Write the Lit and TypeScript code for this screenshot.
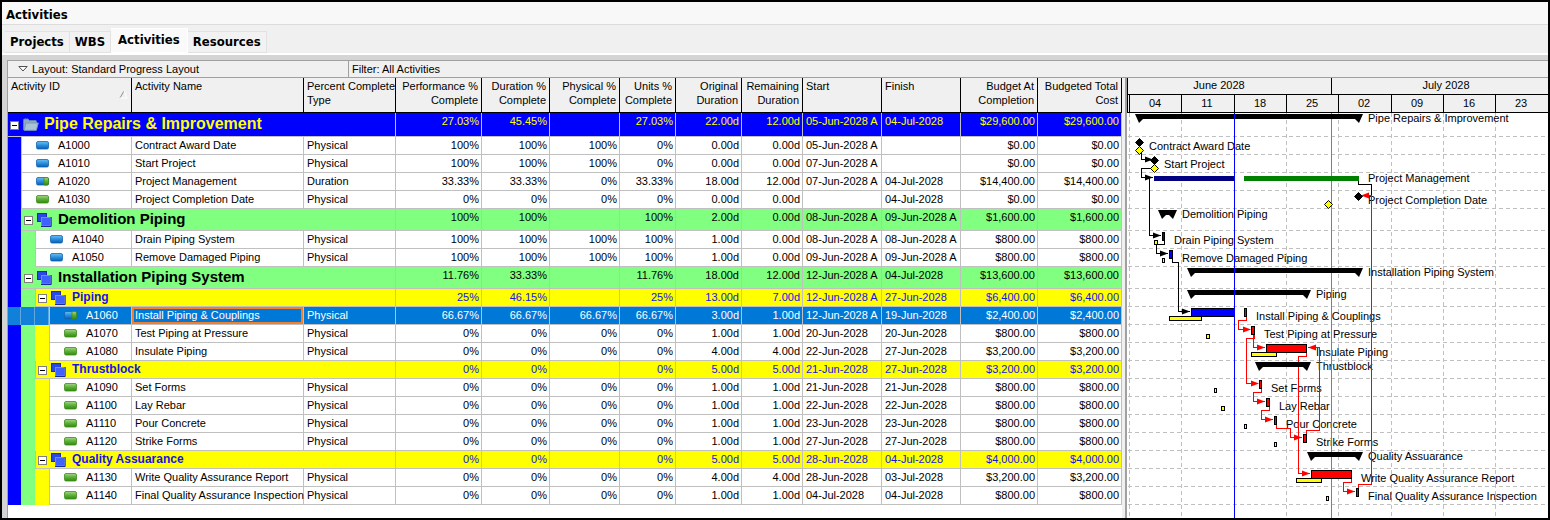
import { LitElement, html, svg, css, nothing } from "lit";
import { customElement, state } from "lit/decorators.js";
import { classMap } from "lit/directives/class-map.js";

type Status = "done" | "open" | "part";

interface Row {
  level: number;
  group?: boolean;
  status?: Status;
  id?: string;
  name: string;
  type?: string;
  cells: string[];
}

const task = (level: number, status: Status, id: string, name: string, type: string, cells: string): Row => ({
  level, status, id, name, type, cells: cells.split("|"),
});
const group = (level: number, name: string, cells: string): Row => ({
  level, group: true, name, cells: cells.split("|"),
});

const ROWS: Row[] = [
  group(0, "Pipe Repairs & Improvement", "27.03%|45.45%||27.03%|22.00d|12.00d|05-Jun-2028 A|04-Jul-2028|$29,600.00|$29,600.00"),
  task(1, "done", "A1000", "Contract Award Date", "Physical", "100%|100%|100%|0%|0.00d|0.00d|05-Jun-2028 A||$0.00|$0.00"),
  task(1, "done", "A1010", "Start Project", "Physical", "100%|100%|100%|0%|0.00d|0.00d|07-Jun-2028 A||$0.00|$0.00"),
  task(1, "part", "A1020", "Project Management", "Duration", "33.33%|33.33%|0%|33.33%|18.00d|12.00d|07-Jun-2028 A|04-Jul-2028|$14,400.00|$14,400.00"),
  task(1, "open", "A1030", "Project Completion Date", "Physical", "0%|0%|0%|0%|0.00d|0.00d||04-Jul-2028|$0.00|$0.00"),
  group(1, "Demolition Piping", "100%|100%||100%|2.00d|0.00d|08-Jun-2028 A|09-Jun-2028 A|$1,600.00|$1,600.00"),
  task(2, "done", "A1040", "Drain Piping System", "Physical", "100%|100%|100%|100%|1.00d|0.00d|08-Jun-2028 A|08-Jun-2028 A|$800.00|$800.00"),
  task(2, "done", "A1050", "Remove Damaged Piping", "Physical", "100%|100%|100%|100%|1.00d|0.00d|09-Jun-2028 A|09-Jun-2028 A|$800.00|$800.00"),
  group(1, "Installation Piping System", "11.76%|33.33%||11.76%|18.00d|12.00d|12-Jun-2028 A|04-Jul-2028|$13,600.00|$13,600.00"),
  group(2, "Piping", "25%|46.15%||25%|13.00d|7.00d|12-Jun-2028 A|27-Jun-2028|$6,400.00|$6,400.00"),
  task(3, "part", "A1060", "Install Piping & Couplings", "Physical", "66.67%|66.67%|66.67%|66.67%|3.00d|1.00d|12-Jun-2028 A|19-Jun-2028|$2,400.00|$2,400.00"),
  task(3, "open", "A1070", "Test Piping at Pressure", "Physical", "0%|0%|0%|0%|1.00d|1.00d|20-Jun-2028|20-Jun-2028|$800.00|$800.00"),
  task(3, "open", "A1080", "Insulate Piping", "Physical", "0%|0%|0%|0%|4.00d|4.00d|22-Jun-2028|27-Jun-2028|$3,200.00|$3,200.00"),
  group(2, "Thrustblock", "0%|0%||0%|5.00d|5.00d|21-Jun-2028|27-Jun-2028|$3,200.00|$3,200.00"),
  task(3, "open", "A1090", "Set Forms", "Physical", "0%|0%|0%|0%|1.00d|1.00d|21-Jun-2028|21-Jun-2028|$800.00|$800.00"),
  task(3, "open", "A1100", "Lay Rebar", "Physical", "0%|0%|0%|0%|1.00d|1.00d|22-Jun-2028|22-Jun-2028|$800.00|$800.00"),
  task(3, "open", "A1110", "Pour Concrete", "Physical", "0%|0%|0%|0%|1.00d|1.00d|23-Jun-2028|23-Jun-2028|$800.00|$800.00"),
  task(3, "open", "A1120", "Strike Forms", "Physical", "0%|0%|0%|0%|1.00d|1.00d|27-Jun-2028|27-Jun-2028|$800.00|$800.00"),
  group(2, "Quality Assuarance", "0%|0%||0%|5.00d|5.00d|28-Jun-2028|04-Jul-2028|$4,000.00|$4,000.00"),
  task(3, "open", "A1130", "Write Quality Assurance Report", "Physical", "0%|0%|0%|0%|4.00d|4.00d|28-Jun-2028|03-Jul-2028|$3,200.00|$3,200.00"),
  task(3, "open", "A1140", "Final Quality Assurance Inspection", "Physical", "0%|0%|0%|0%|1.00d|1.00d|04-Jul-2028|04-Jul-2028|$800.00|$800.00"),
];

const COLUMNS: { label: string[]; width: number; left?: boolean }[] = [
  { label: ["Activity ID"], width: 124, left: true },
  { label: ["Activity Name"], width: 172, left: true },
  { label: ["Percent Complete", "Type"], width: 92, left: true },
  { label: ["Performance %", "Complete"], width: 86 },
  { label: ["Duration %", "Complete"], width: 68 },
  { label: ["Physical %", "Complete"], width: 70 },
  { label: ["Units %", "Complete"], width: 56 },
  { label: ["Original", "Duration"], width: 66 },
  { label: ["Remaining", "Duration"], width: 61 },
  { label: ["Start"], width: 79, left: true },
  { label: ["Finish"], width: 79, left: true },
  { label: ["Budget At", "Completion"], width: 77 },
  { label: ["Budgeted Total", "Cost"], width: 84 },
];

const pill = (status: Status) => html`
  <svg class="pill" width="13" height="9" viewBox="0 0 13 9" aria-hidden="true">
    <defs>
      <linearGradient id="b" x1="0" y1="0" x2="0" y2="1">
        <stop offset="0" stop-color="#6cc0f4" /><stop offset=".45" stop-color="#2d93e0" /><stop offset="1" stop-color="#0a5cae" />
      </linearGradient>
      <linearGradient id="g" x1="0" y1="0" x2="0" y2="1">
        <stop offset="0" stop-color="#a5d888" /><stop offset=".45" stop-color="#62b23e" /><stop offset="1" stop-color="#2e8c0c" />
      </linearGradient>
    </defs>
    <rect x=".5" y=".5" width="12" height="7.5" rx="1.5" fill=${status === "open" ? "url(#g)" : "url(#b)"}
      stroke=${status === "open" ? "#3c8c1c" : "#1565b0"} stroke-width=".8" />
    ${status === "part" ? svg`<path d="M8 .5H11.3Q12.5.5 12.5 2V6.5Q12.5 8 11.3 8H8Z" fill="url(#g)" stroke="#3c8c1c" stroke-width=".8" />` : nothing}
  </svg>`;

const folder = html`
  <svg width="16" height="13" viewBox="0 0 16 13" aria-hidden="true">
    <path d="M.5 11.5V2Q.5 1 1.5 1H5L6.5 2.5H12.5Q13.5 2.5 13.5 3.5V11.5Z" fill="#8ba9c4" stroke="#6484a4" />
    <path d="M1 12.3L3 5H15.3L13.3 12.3Z" fill="#a9c2d8" stroke="#7b9ab8" />
  </svg>`;

const wbs = html`
  <svg width="15" height="14" viewBox="0 0 15 14" aria-hidden="true">
    <rect x=".5" y=".5" width="9" height="8" fill="#2a48e8" stroke="#1a2ca8" />
    <rect x="4.5" y="4.5" width="9" height="8.5" fill="#3f62ff" stroke="#6f8aff" />
    <path d="M4 13.5H14.2V4" fill="none" stroke="#1a2896" />
  </svg>`;

/* Time scale */
const WEEKS: [number, string][] = [
  [1129, "04"], [1181, "11"], [1234, "18"], [1286, "25"], [1338, "02"], [1391, "09"], [1443, "16"], [1495, "23"], [1548, ""],
];
const ROW_LINES = [136, 154, 172, 190, 208, 230, 248, 266, 288, 306, 324, 342, 360, 378, 396, 414, 432, 450, 468, 486, 504];

/* Labels: x, baseline, text */
const LABELS: [number, number, string][] = [
  [1368, 122, "Pipe Repairs & Improvement"], [1149, 150, "Contract Award Date"], [1164, 168, "Start Project"],
  [1368, 182, "Project Management"], [1368, 204, "Project Completion Date"], [1182, 218, "Demolition Piping"],
  [1174, 244, "Drain Piping System"], [1182, 262, "Remove Damaged Piping"], [1368, 276, "Installation Piping System"],
  [1316, 298, "Piping"], [1256, 320, "Install Piping & Couplings"], [1264, 338, "Test Piping at Pressure"],
  [1316, 356, "Insulate Piping"], [1316, 370, "Thrustblock"], [1271, 392, "Set Forms"], [1279, 410, "Lay Rebar"],
  [1286, 428, "Pour Concrete"], [1316, 446, "Strike Forms"], [1368, 460, "Quality Assuarance"],
  [1361, 482, "Write Quality Assurance Report"], [1368, 500, "Final Quality Assurance Inspection"],
];

/* Summary bars: start, end, top */
const SUMMARIES: [number, number, number][] = [
  [1135, 1363, 114], [1158, 1177, 210], [1187, 1363, 268], [1187, 1311, 290], [1255, 1311, 362], [1307, 1363, 452],
];

/* Outlined bars: x, y, width, height, colour */
const YELLOW = "#ffff00", RED = "#ff0000", BLUE = "#0000ff";
const BARS: [number, number, number, number, string][] = [
  [1154, 240, 4, 5, YELLOW], [1162, 258, 3, 5, YELLOW], [1169, 316, 33, 5, YELLOW], [1206, 334, 4, 5, YELLOW],
  [1251, 352, 26, 5, YELLOW], [1214, 388, 3, 5, YELLOW], [1221, 406, 4, 5, YELLOW], [1244, 424, 3, 5, YELLOW],
  [1274, 442, 3, 5, YELLOW], [1296, 478, 26, 5, YELLOW], [1326, 496, 3, 5, YELLOW],
  [1162, 232, 3, 9, BLUE], [1169, 250, 4, 9, BLUE], [1191, 308, 44, 9, BLUE],
  [1244, 308, 3, 9, RED], [1251, 326, 4, 9, RED], [1266, 344, 41, 9, RED], [1259, 380, 3, 9, RED],
  [1266, 398, 4, 9, RED], [1274, 416, 3, 9, RED], [1303, 434, 4, 9, RED], [1311, 470, 41, 9, RED], [1356, 488, 3, 9, RED],
];

const LINKS: [string, string][] = [
  ["#000", "M1141.5 151V159.5H1150"], ["#000", "M1154.5 164V168.5H1141.5V177.5H1153"], ["#000", "M1149.5 178V235.5H1161"],
  ["#000", "M1164.5 241V244.5H1156.5V253.5H1168"], ["#000", "M1172.5 259V262.5H1178.5V311.5H1190"],
  ["#000", "M1358.5 181V184.5H1371.5V195"], [RED, "M1371.5 195V484.5H1358.5V488"], [RED, "M1371.5 195.5H1360"],
  [RED, "M1246.5 317V320.5H1238.5V329.5H1250"], [RED, "M1254.5 335V338.5H1246.5V383.5H1258"],
  [RED, "M1253.5 335V347.5H1265"], [RED, "M1306.5 353V356.5H1298.5V473.5H1310"],
  [RED, "M1261.5 389V392.5H1253.5V401.5H1265"], [RED, "M1269.5 407V410.5H1261.5V419.5H1273"],
  [RED, "M1276.5 425V428.5H1290.5V437.5H1302"], [RED, "M1306.5 434V430.5H1319.5V347.5H1308"],
  [RED, "M1351.5 479V482.5H1343.5V491.5H1355"],
];

/* Arrow heads: tip x, centre y, direction, colour */
const HEADS: [number, number, 1 | -1, string][] = [
  [1153, 159.5, 1, "#000"], [1153, 177.5, 1, "#000"], [1161, 235.5, 1, "#000"], [1168, 253.5, 1, "#000"], [1190, 311.5, 1, "#000"],
  [1251, 329.5, 1, RED], [1259, 383.5, 1, RED], [1265, 347.5, 1, RED], [1310, 473.5, 1, RED], [1265, 401.5, 1, RED],
  [1273, 419.5, 1, RED], [1302, 437.5, 1, RED], [1355, 491.5, 1, RED], [1308, 347.5, -1, RED], [1361, 195.5, -1, RED],
];

const DIAMONDS: [number, number, string][] = [
  [1139.5, 142.5, "#000"], [1139.5, 150.5, YELLOW], [1154.5, 160.5, "#000"], [1154.5, 168.5, YELLOW],
  [1358.5, 196.5, "#000"], [1328.5, 204.5, YELLOW],
];

@customElement("gantt-chart")
export class GanttChart extends LitElement {
  static styles = css`
    :host { display: block; flex: 1; min-width: 0; overflow: hidden; background: #fff; }
    .chart { display: block; width: 100%; height: 100%; }
    text { font: 11px "Liberation Sans", Arial, sans-serif; fill: #000; }
    .axis { text-anchor: middle; }
    .crisp { shape-rendering: crispEdges; }
    .dash { stroke: #c0c0c0; stroke-dasharray: 4 3; fill: none; }
  `;

  render() {
    return html`
      <svg class="chart" role="img" aria-label="Gantt chart">
        <g transform="translate(-1127 -78)">
          <g class="crisp">
            ${ROW_LINES.map((y) => svg`<path class="dash" d="M1128 ${y + 0.5}H2400" />`)}
            ${WEEKS.map(([x]) => svg`<path class="dash" d="M${x + 0.5} 113V1200" />`)}
          </g>
          <g class="crisp">
            <rect x="1127" y="78" width="1200" height="35" fill="#f0f0f0" />
            <path d="M1127.5 78V113M1127 94.5H2400M1127 112.5H2400M1331.5 78V94" stroke="#000" fill="none" />
            ${WEEKS.map(([x]) => svg`<path d="M${x + 0.5} 94V113" stroke="#000" />`)}
          </g>
          <text class="axis" x="1219" y="89">June 2028</text>
          <text class="axis" x="1446" y="89">July 2028</text>
          ${WEEKS.map(([x, t]) => svg`<text class="axis" x=${x + 26} y="107">${t}</text>`)}
          ${LABELS.map(([x, y, t]) => svg`<text x=${x} y=${y}>${t}</text>`)}
          <g class="crisp">
            <path d="M1331.5 113V1200" stroke="#808080" />
            <rect x="1154" y="176" width="81" height="5" fill="#000080" />
            <rect x="1244" y="176" width="115" height="5" fill="#008000" />
            ${BARS.map(([x, y, w, h, c]) => svg`
              <rect x=${x + 0.5} y=${y + 0.5} width=${w - 1} height=${h - 1} fill=${c} stroke="#000" />`)}
            ${LINKS.map(([c, d]) => svg`<path d=${d} stroke=${c} fill="none" />`)}
          </g>
          ${SUMMARIES.map(([a, b, y]) => svg`
            <path d="M${a} ${y}H${b}L${b - 4} ${y + 9}L${b - 8} ${y + 5}H${a + 8}L${a + 4} ${y + 9}Z" />`)}
          ${HEADS.map(([x, y, d, c]) => svg`
            <path d="M${x} ${y}L${x - 8 * d} ${y - 3}V${y + 3}Z" fill=${c} />`)}
          ${DIAMONDS.map(([x, y, c]) => svg`
            <path d="M${x} ${y - 4}L${x + 4} ${y}L${x} ${y + 4}L${x - 4} ${y}Z" fill=${c} stroke="#000" />`)}
          <path class="crisp" d="M1234.5 113V1200" stroke="#0000ff" />
        </g>
      </svg>`;
  }
}

@customElement("activity-table")
export class ActivityTable extends LitElement {
  static styles = css`
    :host { display: block; flex: none; background: #fff; }
    table { border-collapse: collapse; table-layout: fixed; width: 1114px; font: 11px/16px "Liberation Sans", Arial, sans-serif; }
    th, td { padding: 0; font-weight: normal; vertical-align: top; white-space: nowrap; overflow: hidden; }
    th { background: #f0f0f0; }
    .head { box-sizing: border-box; height: 35px; padding: 1px 3px 0; border-right: 1px solid #000; border-bottom: 1px solid #000; line-height: 14px; text-align: right; }
    .head.left { text-align: left; }
    .line { display: block; }
    .sort { display: block; margin: -2px 0 0 auto; }
    .cell { box-sizing: border-box; height: 18px; padding: 0 2px; border-right: 1px solid #c0c0c0; border-bottom: 1px solid #c0c0c0; text-align: right; }
    .cell.left { text-align: left; padding: 0 3px; }
    .tree { display: flex; height: 18px; }
    .stripe { flex: none; box-sizing: border-box; width: 14px; }
    .s0 { background: #0000ff; width: 13px; }
    .s1 { background: #80ff80; }
    .s2 { background: #ffff00; }
    .node { box-sizing: border-box; flex: 1; display: flex; border: 1px solid #c0c0c0; border-top: 0; }
    .pill { flex: none; margin: 4px 9px 0 14px; }
    .bar { box-sizing: border-box; flex: 1; display: flex; align-items: center; padding-bottom: 1px; border-bottom: 1px solid #c0c0c0; border-right: 1px solid #c0c0c0; }
    .g1 .bar { border-left: 1px solid #80ff80; }
    .g2 .bar { border-left: 1px solid #c0c0c0; }
    .box { flex: none; display: flex; align-items: center; justify-content: center; width: 9px; height: 9px; margin: 2px 4px 0 2px; padding: 0; border: 1px solid #808080; background: #fff; }
    .box::before { content: ""; width: 5px; height: 1px; background: #000; }
    .icon { flex: none; display: flex; width: 21px; margin-top: 1px; }
    .g0 { background: #0000ff; color: #ffff00; }
    .g1 { background: #80ff80; color: #000; }
    .g2 { background: #ffff00; color: #1414e6; }
    .g0 .tree, .g0 .cell { height: 24px; }
    .g1 .tree, .g1 .cell { height: 22px; }
    .title { font-weight: bold; }
    .g0 .title { font-size: 16px; }
    .g1 .title { font-size: 15px; }
    .g2 .title { font-size: 12px; }
    .selected { background: #0078d7; color: #fff; }
    .selected .stripe { background: #1080da; border-right: 1px solid #60a8e0; }
    .selected .focus { box-shadow: inset 0 0 0 2px #f08030; }
  `;

  @state() private selected = "A1060";

  private treeCell(r: Row) {
    const stripes = Array.from({ length: r.level }, (_, i) => html`<span class="stripe s${i}"></span>`);
    return r.group
      ? html`<div class="tree">${stripes}<div class="bar">
          <button class="box" aria-label="Collapse ${r.name}"></button>
          <span class="icon">${r.level === 0 ? folder : wbs}</span><span class="title">${r.name}</span></div></div>`
      : html`<div class="tree">${stripes}<div class="node">${pill(r.status!)}<span>${r.id}</span></div></div>`;
  }

  private row(r: Row) {
    const sel = r.id === this.selected;
    return html`<tr class=${classMap({ [`g${r.level}`]: !!r.group, selected: sel })}
        @click=${() => { if (r.id) this.selected = r.id; }}>
      ${r.group
        ? html`<td colspan="3">${this.treeCell(r)}</td>`
        : html`<td>${this.treeCell(r)}</td>
            <td><div class="cell left focus">${r.name}</div></td>
            <td><div class="cell left">${r.type}</div></td>`}
      ${r.cells.map((c, i) => html`<td><div class="cell ${COLUMNS[i + 3].left ? "left" : ""}">${c}</div></td>`)}
    </tr>`;
  }

  render() {
    return html`
      <table>
        <colgroup>${COLUMNS.map((c) => html`<col style="width:${c.width}px">`)}</colgroup>
        <thead><tr>${COLUMNS.map((c, i) => html`<th scope="col"><div class="head ${c.left ? "left" : ""}">
          ${c.label.map((l) => html`<span class="line">${l}</span>`)}
          ${i === 0 ? html`<svg class="sort" width="9" height="8" viewBox="0 0 9 8" aria-hidden="true">
            <path d="M1 7L5 0" stroke="#909090" fill="none" /><path d="M5 0L8 7H1" stroke="#fff" fill="none" /></svg>` : nothing}
        </div></th>`)}</tr></thead>
        <tbody>${ROWS.map((r) => this.row(r))}</tbody>
      </table>`;
  }
}

@customElement("app-root")
export class AppRoot extends LitElement {
  static styles = css`
    :host { display: flex; flex-direction: column; box-sizing: border-box; height: 100vh; border: 2px solid #000; background: #f0f0f0; font: 11px/16px "Liberation Sans", Arial, sans-serif; color: #000; overflow: hidden; }
    h1 { margin: 0; padding: 4px 4px 0; background: #f8f8f8; border-bottom: 1px solid #dcdcdc; font: bold 13px/18px "DejaVu Sans Condensed", Verdana, sans-serif; }
    nav { display: flex; align-items: flex-end; height: 26px; padding: 2px 3px 0; background: #f0f0f0; border-bottom: 2px solid #fff; }
    .tab { box-sizing: border-box; height: 22px; margin: 0; padding: 0 5px; border: 1px solid #e2e2e2; border-left: 0; background: #f2f2f2; font: bold 13px/18px "DejaVu Sans Condensed", Verdana, sans-serif; color: #000; }
    .tab.active { height: 25px; padding: 0 7px 1px; background: #fafafa; border-color: #fff; }
    .work { flex: 1; min-height: 0; display: flex; flex-direction: column; padding: 5px 0 0 5px; background: #d4d4d4; }
    .options { display: flex; height: 18px; box-sizing: border-box; background: #f0f0f0; border: 1px solid #a0a0a0; border-right: 0; }
    .option { display: flex; align-items: center; gap: 4px; margin: 0; border: 0; background: none; padding: 0 3px; font: inherit; color: inherit; }
    .layout { width: 341px; padding-left: 10px; border-right: 1px solid #a0a0a0; }
    .panes { flex: 1; min-height: 0; display: flex; background: #fff; border-left: 1px solid #a0a0a0; }
    .splitter { flex: none; box-sizing: border-box; width: 5px; background: #f0f0f0; border-right: 2px solid #a0a0a0; }
  `;

  @state() private tab = "Activities";

  render() {
    return html`
      <h1>Activities</h1>
      <nav role="tablist">
        ${["Projects", "WBS", "Activities", "Resources"].map((t) => html`
          <button role="tab" aria-selected=${t === this.tab} class=${classMap({ tab: true, active: t === this.tab })}
            @click=${() => (this.tab = t)}>${t}</button>`)}
      </nav>
      <div class="work">
        <div class="options">
          <button class="option layout">
            <svg width="10" height="6" viewBox="0 0 10 6" aria-hidden="true"><path d="M.8.5H9.2L5 5Z" fill="#fff" stroke="#505050" /></svg>
            Layout: Standard Progress Layout</button>
          <button class="option">Filter: All Activities</button>
        </div>
        <div class="panes">
          <activity-table></activity-table>
          <div class="splitter"></div>
          <gantt-chart></gantt-chart>
        </div>
      </div>`;
  }
}
